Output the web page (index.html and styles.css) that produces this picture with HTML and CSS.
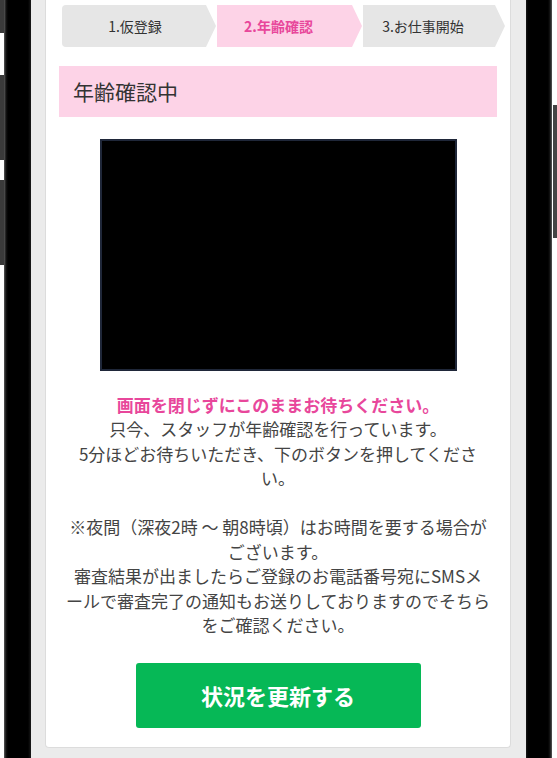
FILE: index.html
```html
<!DOCTYPE html>
<html lang="ja">
<head>
<meta charset="utf-8">
<title>年齢確認中</title>
<link rel="stylesheet" href="styles.css">
</head>
<body>
<div class="device">
  <div class="edge edge-left">
    <span class="side-btn side-btn-a"></span>
    <span class="side-btn side-btn-b"></span>
    <span class="side-btn side-btn-c"></span>
  </div>
  <div class="bezel bezel-left"></div>
  <div class="screen">
    <main class="card">
      <ol class="steps">
        <li class="step step-1">1.仮登録</li>
        <li class="step step-2">2.年齢確認</li>
        <li class="step step-3">3.お仕事開始</li>
      </ol>
      <h1 class="status-title">年齢確認中</h1>
      <div class="camera"></div>
      <p class="message">
        <strong class="alert">画面を閉じずにこのままお待ちください。</strong><br>
        只今、スタッフが年齢確認を行っています。<br>
        5分ほどお待ちいただき、下のボタンを押してくださ<br>い。<br>
        <br>
        ※夜間（深夜2時 ～ 朝8時頃）はお時間を要する場合が<br>ございます。<br>
        審査結果が出ましたらご登録のお電話番号宛にSMSメ<br>ールで審査完了の通知もお送りしておりますのでそちら<br>をご確認ください。
      </p>
      <button class="refresh" type="button">状況を更新する</button>
    </main>
  </div>
  <div class="bezel bezel-right"></div>
  <div class="edge edge-right">
    <span class="side-btn side-btn-d"></span>
  </div>
</div>
</body>
</html>
```

FILE: styles.css
```css
* {
  box-sizing: border-box;
}

html, body {
  margin: 0;
  padding: 0;
  background: #ffffff;
}

body {
  font-family: "Noto Sans CJK JP", "Noto Sans", sans-serif;
  color: #444444;
}

.device {
  display: flex;
  height: 758px;
  overflow: hidden;
}

.edge {
  display: flex;
  flex-direction: column;
  background: #ffffff;
}

.edge-left {
  width: 4px;
}

.edge-right {
  width: 5px;
}

.side-btn {
  display: block;
  background: #3a3a3a;
}

.side-btn-a {
  height: 33px;
}

.side-btn-b {
  height: 85px;
  margin-top: 42px;
}

.side-btn-c {
  height: 85px;
  margin-top: 20px;
}

.side-btn-d {
  height: 133px;
  margin-top: 105px;
  margin-left: 1px;
  background: #444444;
}

.bezel {
  flex: none;
  background: #000000;
}

.bezel-left {
  width: 27px;
  background: linear-gradient(to right, #5a5a5a 0, #151515 2px, #000 4px, #000 24px, #1a1a1a 27px);
}

.bezel-right {
  width: 26px;
  background: linear-gradient(to right, #1a1a1a 0, #000 2px, #000 22px, #151515 24px, #5a5a5a 26px);
}

.screen {
  flex: none;
  width: 495px;
  background: #ebebeb;
  padding: 0 15px 0 14px;
}

.card {
  background: #ffffff;
  border: 1px solid #dcdcdc;
  border-top: none;
  border-radius: 0 0 4px 4px;
  padding: 5px 13px 19px;
}

.steps {
  list-style: none;
  margin: 0 0 0 3px;
  padding: 0;
  display: flex;
  gap: 1px;
  width: 443px;
}

.step {
  flex: none;
  height: 42px;
  line-height: 42px;
  font-size: 14px;
  text-align: center;
  color: #333333;
  background: #e6e6e6;
  clip-path: polygon(0 0, calc(100% - 10px) 0, 100% 50%, calc(100% - 10px) 100%, 0 100%);
}

.step-1 {
  width: 154px;
  padding-right: 8px;
  border-radius: 4px 0 0 4px;
}

.step-2 {
  width: 145px;
  padding-right: 22px;
  background: #fdd3e7;
  color: #e8479b;
  font-weight: bold;
}

.step-3 {
  width: 142px;
  padding-right: 22px;
}

.status-title {
  margin: 19px 0 0;
  height: 51px;
  line-height: 51px;
  padding-left: 14px;
  background: #fdd3e7;
  font-size: 21px;
  font-weight: normal;
  color: #333333;
}

.camera {
  width: 357px;
  height: 232px;
  margin: 22px auto 0;
  background: #000000;
  border: 2px solid #1f2739;
}

.message {
  margin: 21.75px 0 0;
  text-align: center;
  font-size: 17px;
  line-height: 24.5px;
  color: #444444;
  white-space: nowrap;
}

.alert {
  color: #e8479b;
  font-weight: bold;
}

.refresh {
  display: block;
  width: 285px;
  height: 65px;
  margin: 25px auto 0;
  border: none;
  border-radius: 3px;
  background: #06b856;
  color: #ffffff;
  font-family: inherit;
  font-size: 22px;
  font-weight: bold;
  cursor: pointer;
}
```
